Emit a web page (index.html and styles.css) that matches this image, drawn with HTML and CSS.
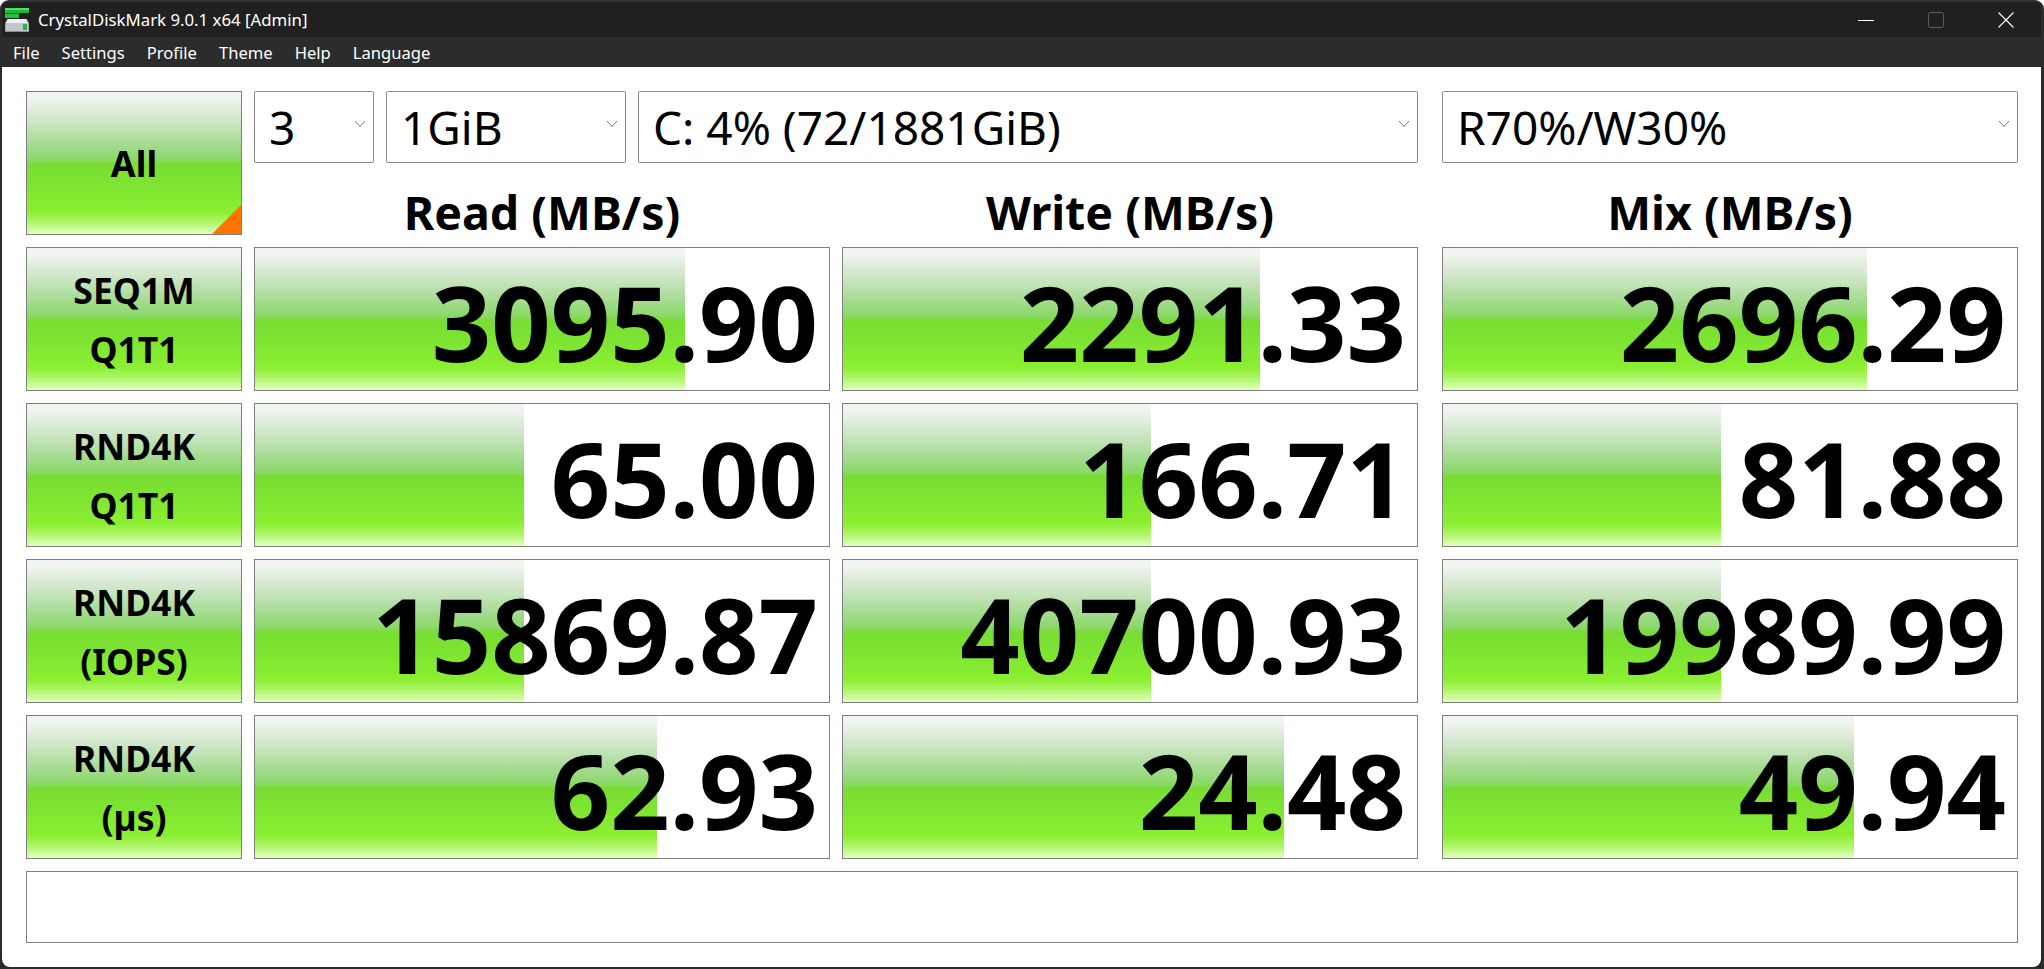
FILE: index.html
```html
<!DOCTYPE html>
<html lang="en">
<head>
<meta charset="utf-8">
<title>CrystalDiskMark 9.0.1 x64 [Admin]</title>
<link rel="stylesheet" href="styles.css">
</head>
<body>
<div class="window">
  <header class="titlebar">
    <svg class="app-icon" width="24" height="24" viewBox="0 0 24 24" aria-hidden="true">
      <rect x="0" y="0" width="24" height="2" fill="#4fe06a"/>
      <rect x="0" y="2" width="24" height="3" fill="#1fb83a"/>
      <rect x="0" y="5" width="14" height="1" fill="#0e7a22"/>
      <rect x="0" y="6" width="14" height="4" fill="#22c23e"/>
      <path d="M2 11h20l2 4v9H0v-9z" fill="#8d9196"/>
      <path d="M3 11h18l2 4H1z" fill="#eef0f6"/>
      <rect x="0.5" y="15" width="23" height="8" fill="#c2c5cc"/>
      <rect x="18" y="16" width="4" height="6" fill="#27b33f"/>
    </svg>
    <span class="title">CrystalDiskMark 9.0.1 x64 [Admin]</span>
    <div class="controls">
      <span class="ctl"><svg width="16" height="16" viewBox="0 0 16 16" aria-hidden="true"><path d="M0 8.500h16" stroke="#fff" stroke-width="1"/></svg></span>
      <span class="ctl"><svg width="16" height="16" viewBox="0 0 16 16" aria-hidden="true"><rect x=".5" y=".5" width="15" height="15" rx="2" fill="none" stroke="#5c5c5c"/></svg></span>
      <span class="ctl"><svg width="16" height="16" viewBox="0 0 16 16" aria-hidden="true"><path d="M.5.5l15 15M15.500.5l-15 15" stroke="#fff" stroke-width="1.100"/></svg></span>
    </div>
  </header>
  <nav class="menubar">
    <span>File</span><span>Settings</span><span>Profile</span><span>Theme</span><span>Help</span><span>Language</span>
  </nav>
  <main class="board">
    <button class="gloss test all" type="button">All</button>
    <div class="selects">
      <div class="select s-count"><span>3</span><svg class="chev" width="12" height="8" viewBox="0 0 12 8" aria-hidden="true"><path d="M1 1l5 5.500L11 1" fill="none" stroke="#777" stroke-width="1"/></svg></div>
      <div class="select s-size"><span>1GiB</span><svg class="chev" width="12" height="8" viewBox="0 0 12 8" aria-hidden="true"><path d="M1 1l5 5.500L11 1" fill="none" stroke="#777" stroke-width="1"/></svg></div>
      <div class="select s-drive"><span>C: 4% (72/1881GiB)</span><svg class="chev" width="12" height="8" viewBox="0 0 12 8" aria-hidden="true"><path d="M1 1l5 5.500L11 1" fill="none" stroke="#777" stroke-width="1"/></svg></div>
      <div class="select s-mix"><span>R70%/W30%</span><svg class="chev" width="12" height="8" viewBox="0 0 12 8" aria-hidden="true"><path d="M1 1l5 5.500L11 1" fill="none" stroke="#777" stroke-width="1"/></svg></div>
    </div>
    <div class="head">Read (MB/s)</div>
    <div class="head">Write (MB/s)</div>
    <div class="head mix">Mix (MB/s)</div>

    <button class="gloss test" type="button"><span>SEQ1M</span><span>Q1T1</span></button>
    <div class="cell" style="background-size:430px 100%">3095.90</div>
    <div class="cell" style="background-size:417px 100%">2291.33</div>
    <div class="cell mix" style="background-size:424px 100%">2696.29</div>

    <button class="gloss test" type="button"><span>RND4K</span><span>Q1T1</span></button>
    <div class="cell" style="background-size:269px 100%">65.00</div>
    <div class="cell" style="background-size:308px 100%">166.71</div>
    <div class="cell mix" style="background-size:278px 100%">81.88</div>

    <button class="gloss test" type="button"><span>RND4K</span><span>(IOPS)</span></button>
    <div class="cell" style="background-size:269px 100%">15869.87</div>
    <div class="cell" style="background-size:308px 100%">40700.93</div>
    <div class="cell mix" style="background-size:278px 100%">19989.99</div>

    <button class="gloss test" type="button"><span>RND4K</span><span>(µs)</span></button>
    <div class="cell" style="background-size:402px 100%">62.93</div>
    <div class="cell" style="background-size:441px 100%">24.48</div>
    <div class="cell mix" style="background-size:411px 100%">49.94</div>

    <div class="status"></div>
  </main>
</div>
</body>
</html>
```
FILE: styles.css
```css
* { box-sizing: border-box; }
html, body { margin: 0; height: 100%; background: #fff; overflow: hidden; }
body { font-family: "Noto Sans", "Open Sans", sans-serif; color: #000; }

.window {
  width: 2044px;
  height: 969px;
  display: flex;
  flex-direction: column;
  background: #262626;
  border: 2px solid #2b2b2b;
  border-top-color: #333;
  border-right-width: 3px;
  border-radius: 9px 9px 0 0;
  overflow: hidden;
}

.titlebar {
  height: 35px;
  flex: none;
  display: flex;
  align-items: center;
  background: #202020;
  color: #fff;
  padding-left: 3px;
}
.app-icon { flex: none; margin-top: 1px; }
.title { margin-left: 9px; font-size: 16.8px; }
.controls { margin-left: auto; display: flex; }
.ctl { width: 70px; height: 35px; display: flex; align-items: center; justify-content: center; }

.menubar {
  height: 30px;
  flex: none;
  display: flex;
  align-items: center;
  gap: 22px;
  padding-left: 11px;
  background: #2c2c2c;
  color: #fff;
  font-size: 16.6px;
}

.board {
  flex: 1;
  display: grid;
  grid-template-columns: 216px 576px 576px 588px;
  grid-template-rows: 72px 60px repeat(4, 144px) 72px;
  gap: 12px;
  padding: 24px;
  align-content: start;
  background: #fff;
  border-radius: 0 0 8px 8px;
}

.gloss,
.cell {
  background-image: linear-gradient(180deg,
    #f1f6f2 0%, #eff4ef 5%, #cfe6c9 20%, #a7dc94 36%, #8ad866 48%,
    #78dd32 51%, #7ee432 65%, #8bef31 84%, #b0f66b 92%, #e0ffc0 100%);
  background-repeat: no-repeat;
}

.test {
  position: relative;
  padding: 0;
  margin: 0;
  border: 1px solid #808080;
  font: inherit;
  font-size: 35.5px;
  font-weight: 700;
  color: #000;
  display: flex;
  flex-direction: column;
  align-items: center;
  justify-content: center;
  line-height: 59px;
  padding-top: 1px;
}

.all { grid-row: span 2; font-size: 36px; padding-top: 0; }
.all::after {
  content: "";
  position: absolute;
  right: 0;
  bottom: 0;
  width: 29px;
  height: 29px;
  background: #ff7300;
  clip-path: polygon(100% 0, 100% 100%, 0 100%);
}

.selects { grid-column: span 3; display: flex; gap: 12px; }
.select {
  height: 72px;
  flex: none;
  display: flex;
  align-items: center;
  justify-content: space-between;
  padding: 0 7px 0 14px;
  border: 1px solid #8a8a8a;
  border-radius: 2px;
  font-size: 46px;
  line-height: 1;
  background: #fff;
}
.chev { flex: none; margin-top: -6px; }
.s-count { width: 120px; }
.s-size { width: 240px; }
.s-drive { width: 780px; }
.s-mix { width: 576px; margin-left: 12px; }

.head {
  font-size: 46.5px;
  font-weight: 700;
  text-align: center;
  line-height: 60px;
  padding-top: 7px;
  white-space: nowrap;
}

.cell {
  border: 1px solid #808080;
  background-color: #fff;
  background-position: 0 0;
  font-size: 104px;
  font-weight: 700;
  line-height: 142px;
  padding: 3px 11px 0 0;
  text-align: right;
  white-space: nowrap;
}

.mix { margin-left: 12px; }

.status {
  grid-column: 1 / -1;
  border: 1px solid #808080;
}
```
